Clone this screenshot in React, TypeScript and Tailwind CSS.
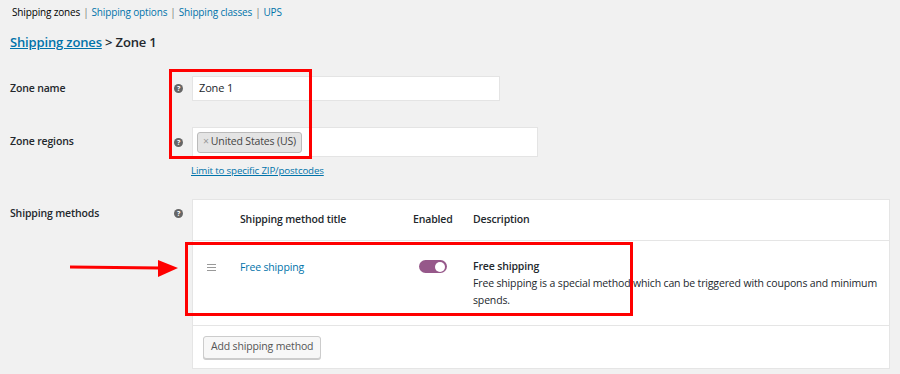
import React from "react";

function Help() {
  return (
    <span className="flex h-[9px] w-[9px] items-center justify-center rounded-full bg-[#666] text-[7px] font-bold leading-none text-white">
      ?
    </span>
  );
}

export default function App() {
  return (
    <div
      className="relative h-[374px] w-[900px] overflow-hidden bg-[#f1f1f1] text-[#23282d] tracking-[-0.15px]"
      style={{ fontFamily: '"Open Sans", sans-serif' }}
    >
      {/* sub nav */}
      <div className="flex items-center pl-[12px] pt-[5px] text-[10px] leading-[14px]">
        <span className="text-[#000]">Shipping zones</span>
        <span className="mx-[3px] text-[#777]">|</span>
        <span className="text-[#0073aa]">Shipping options</span>
        <span className="mx-[3px] text-[#777]">|</span>
        <span className="text-[#0073aa]">Shipping classes</span>
        <span className="mx-[3px] text-[#777]">|</span>
        <span className="text-[#0073aa]">UPS</span>
      </div>

      {/* breadcrumb */}
      <h2 className="mt-[14px] pl-[10px] text-[13px] font-semibold leading-[18px]">
        <a className="text-[#0073aa] underline">Shipping zones</a>
        <span> &gt; Zone 1</span>
      </h2>

      {/* form */}
      <div className="mt-[25px] flex flex-col">
        {/* zone name */}
        <div className="flex items-center">
          <div className="w-[164px] pl-[10px] text-[10.5px] font-semibold">Zone name</div>
          <div className="flex w-[28px] justify-start pl-[10px]">
            <Help />
          </div>
          <div className="flex h-[25px] w-[308px] items-center border border-[#e4e4e4] bg-white px-[6px] text-[11px]">
            Zone 1
          </div>
        </div>

        {/* zone regions */}
        <div className="mt-[26px] flex items-center">
          <div className="w-[164px] pl-[10px] text-[10.5px] font-semibold">Zone regions</div>
          <div className="flex w-[28px] justify-start pl-[10px]">
            <Help />
          </div>
          <div className="flex h-[30px] w-[346px] items-center border border-[#e4e4e4] bg-white px-[4px]">
            <span className="flex h-[21px] items-center rounded-[3px] border border-[#bbb] bg-[#e4e4e4] pl-[5px] pr-[5px] text-[10.5px] text-[#444]">
              <span className="mr-[2px] text-[#999]">×</span>United States (US)
            </span>
          </div>
        </div>
        <div className="ml-[191px] mt-[8px] text-[9.75px] leading-[12px] text-[#0073aa] underline">
          Limit to specific ZIP/postcodes
        </div>

        {/* shipping methods */}
        <div className="mt-[22px] flex items-start">
          <div className="w-[164px] pl-[10px] pt-[7px] text-[10.5px] font-semibold">Shipping methods</div>
          <div className="flex w-[28px] justify-start pl-[10px] pt-[10px]">
            <Help />
          </div>
          <div className="flex w-[698px] flex-col border border-[#e5e5e5] bg-white text-[10.5px]">
            <div className="flex h-[41px] items-center border-b border-[#e5e5e5] font-semibold">
              <div className="w-[47px]" />
              <div className="w-[173px]">Shipping method title</div>
              <div className="w-[60px]">Enabled</div>
              <div>Description</div>
            </div>
            <div className="flex h-[85px] items-start border-b border-[#e5e5e5] pt-[17px]">
              <div className="flex w-[47px] justify-start pl-[14px] pt-[6px]">
                <div className="flex flex-col gap-[2px]">
                  <span className="h-[1px] w-[9px] bg-[#999]" />
                  <span className="h-[1px] w-[9px] bg-[#999]" />
                  <span className="h-[1px] w-[9px] bg-[#999]" />
                </div>
              </div>
              <div className="w-[173px] leading-[18px] text-[#0073aa]">Free shipping</div>
              <div className="w-[60px] pl-[6px] pt-[2px]">
                <div className="flex h-[13px] w-[28px] items-center justify-end rounded-full bg-[#96588a] pr-[2px]">
                  <span className="h-[10px] w-[10px] rounded-full bg-white" />
                </div>
              </div>
              <div className="w-[410px] leading-[17px]">
                <div className="font-semibold">Free shipping</div>
                <div>Free shipping is a special method which can be triggered with coupons and minimum spends.</div>
              </div>
            </div>
            <div className="flex h-[42px] items-center pl-[10px]">
              <button className="h-[23px] rounded-[3px] border border-[#ccc] bg-[#f7f7f7] px-[7px] text-[10.5px] text-[#555] shadow-[0_1px_0_#ccc]">
                Add shipping method
              </button>
            </div>
          </div>
        </div>
      </div>

      {/* annotations */}
      <div className="absolute left-[169px] top-[69px] h-[90px] w-[143px] border-[3px] border-[#f00]" />
      <div className="absolute left-[185px] top-[242px] h-[74px] w-[448px] border-[3px] border-[#f00]" />
      <svg className="absolute left-[68px] top-[258px]" width="112" height="20" viewBox="0 0 112 20">
        <line x1="2" y1="9" x2="92" y2="10" stroke="#f00" strokeWidth="3" />
        <polygon points="90,2 110,10 90,19" fill="#f00" />
      </svg>
    </div>
  );
}
